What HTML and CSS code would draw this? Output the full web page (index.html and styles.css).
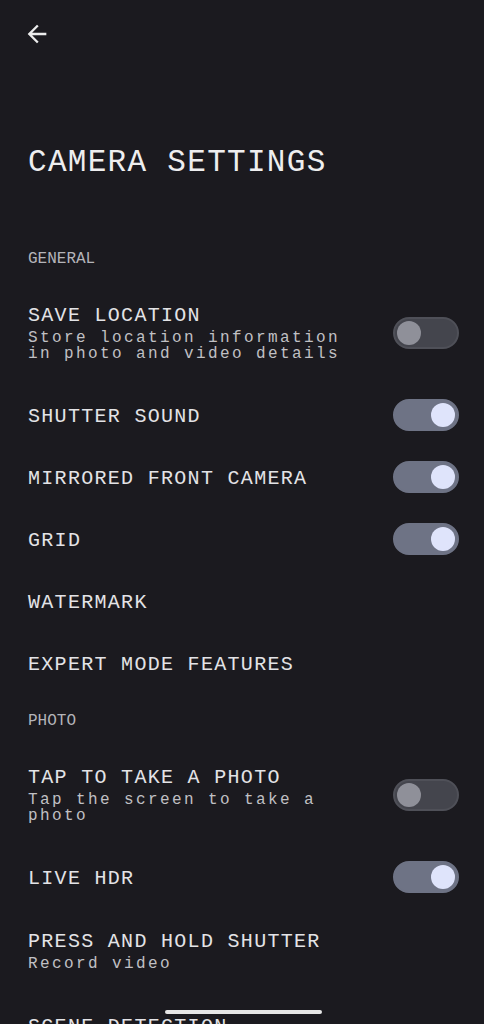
FILE: index.html
```html
<!DOCTYPE html>
<html lang="en">
<head>
    <meta charset="UTF-8">
    <meta name="viewport" content="width=device-width, initial-scale=1.0">
    <title>Camera settings</title>
    <link rel="stylesheet" href="styles.css">
</head>
<body>
    <div class="topbar">
        <button class="back" aria-label="Back">
            <svg viewBox="0 0 24 24" width="28" height="28"><path d="M20 11H7.83l5.59-5.59L12 4l-8 8 8 8 1.41-1.41L7.83 13H20v-2z" fill="#ececec"/></svg>
        </button>
    </div>

    <h1 class="page-title">CAMERA SETTINGS</h1>

    <div class="section">GENERAL</div>

    <div class="row tall">
        <div class="text">
            <div class="label">SAVE LOCATION</div>
            <div class="sub">Store location information in photo and video details</div>
        </div>
        <span class="switch"></span>
    </div>
    <div class="row">
        <div class="text"><div class="label">SHUTTER SOUND</div></div>
        <span class="switch on"></span>
    </div>
    <div class="row">
        <div class="text"><div class="label">MIRRORED FRONT CAMERA</div></div>
        <span class="switch on"></span>
    </div>
    <div class="row">
        <div class="text"><div class="label">GRID</div></div>
        <span class="switch on"></span>
    </div>
    <div class="row">
        <div class="text"><div class="label">WATERMARK</div></div>
    </div>
    <div class="row">
        <div class="text"><div class="label">EXPERT MODE FEATURES</div></div>
    </div>

    <div class="section">PHOTO</div>

    <div class="row tall">
        <div class="text">
            <div class="label">TAP TO TAKE A PHOTO</div>
            <div class="sub">Tap the screen to take a photo</div>
        </div>
        <span class="switch"></span>
    </div>
    <div class="row">
        <div class="text"><div class="label">LIVE HDR</div></div>
        <span class="switch on"></span>
    </div>
    <div class="row tall">
        <div class="text">
            <div class="label">PRESS AND HOLD SHUTTER</div>
            <div class="sub">Record video</div>
        </div>
    </div>
    <div class="row">
        <div class="text"><div class="label">SCENE DETECTION</div></div>
    </div>

    <div class="home-bar"></div>
</body>
</html>
```

FILE: styles.css
```css
body {
    margin: 0;
    background-color: #1b1a1f;
    color: #e3e3e6;
    font-family: "Liberation Mono", "DejaVu Sans Mono", monospace;
    overflow: hidden;
}

.topbar {
    height: 68px;
    display: flex;
    align-items: center;
    padding-left: 23px;
}

.back {
    background: none;
    border: none;
    padding: 0;
    display: flex;
}

.page-title {
    margin: 0;
    padding: 75px 28px 49px;
    font-size: 31px;
    line-height: 40px;
    font-weight: normal;
    letter-spacing: 1.3px;
    color: #eeeeef;
}

.section {
    height: 50px;
    line-height: 54px;
    padding-left: 28px;
    font-size: 16px;
    color: #b4b4b9;
}

.row {
    display: flex;
    align-items: center;
    gap: 40px;
    min-height: 32px;
    padding: 15px 25px 15px 28px;
}

.row.tall {
    padding-top: 22px;
    padding-bottom: 22px;
}

.text {
    flex: 1;
}

.label {
    padding-top: 3px;
    font-size: 20px;
    line-height: 24px;
    letter-spacing: 1.3px;
}

.row.tall .label {
    padding-top: 0;
}

.sub {
    padding-top: 2px;
    font-size: 16px;
    line-height: 16px;
    letter-spacing: 2.4px;
    color: #c0c0c4;
}

.switch {
    flex: none;
    position: relative;
    width: 66px;
    height: 32px;
    box-sizing: border-box;
    border-radius: 16px;
    background-color: #44454d;
    border: 2px solid #4f5058;
}

.switch::after {
    content: "";
    position: absolute;
    top: 2px;
    left: 2px;
    width: 24px;
    height: 24px;
    border-radius: 50%;
    background-color: #8f9099;
}

.switch.on {
    background-color: #6e7385;
    border-color: #6e7385;
}

.switch.on::after {
    left: auto;
    right: 2px;
    background-color: #dfe4fb;
}

.home-bar {
    position: fixed;
    left: 165px;
    bottom: 10px;
    width: 157px;
    height: 4px;
    border-radius: 2px;
    background-color: #e6e6e6;
}
```
